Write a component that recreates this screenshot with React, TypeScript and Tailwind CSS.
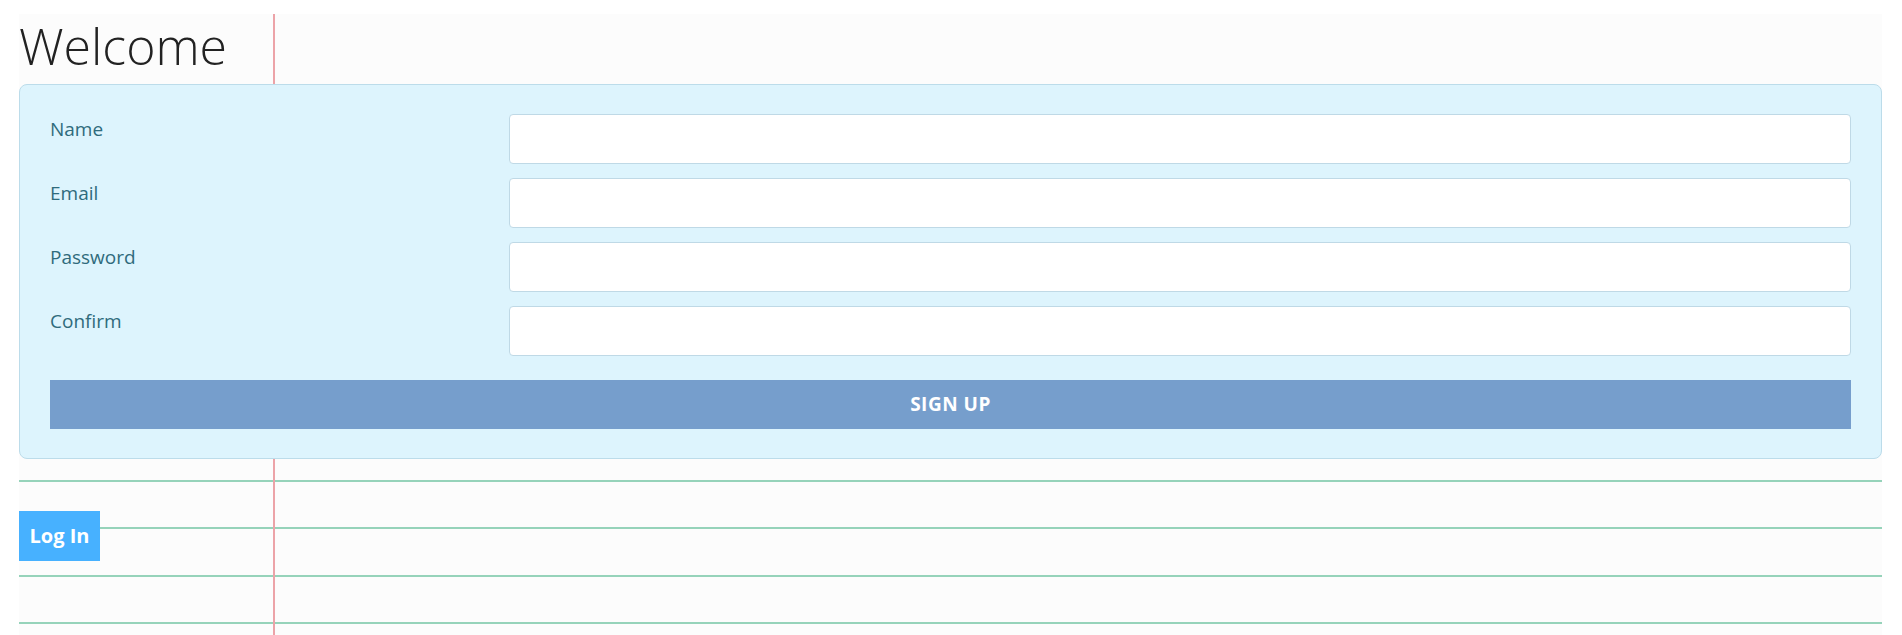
const fields = ["Name", "Email", "Password", "Confirm"]

const lineRows = ["h-[23px]", "h-[47px]", "h-[48px]", "h-[47px]"]

export default function App() {
  return (
    <div className="h-[635px] overflow-hidden bg-white pl-[19px] pr-[20px] pt-[14px] font-['Open_Sans',sans-serif]">
      <div className="relative h-[621px] bg-[#fcfcfc]">
        {/* margin rule of the notebook paper */}
        <div className="absolute bottom-0 left-[254px] top-0 z-[1] w-[2px] bg-[#eca3a8]" />

        <h1 className="mb-[10px] pt-[4px] text-[50px] font-light leading-[56px] text-[#222]">
          Welcome
        </h1>

        <form className="relative z-[2] rounded-[8px] border border-[#bcdcea] bg-[#ddf4fd] px-[30px] py-[29px]">
          <div className="flex flex-col gap-[14px]">
            {fields.map((label) => (
              <div key={label} className="grid grid-cols-[459px_1fr]">
                <label className="pt-px text-[19px] leading-[28px] text-[#2f6b7c]">{label}</label>
                <input
                  type={label === "Password" || label === "Confirm" ? "password" : "text"}
                  className="h-[50px] w-full rounded-[4px] border border-[#bfd9e6] bg-white px-3 text-[18px] outline-none"
                />
              </div>
            ))}
          </div>
          <button
            type="button"
            className="mt-[24px] flex h-[49px] w-full items-center justify-center bg-[#769ecc] text-[19px] font-bold tracking-[0.5px] text-white"
          >
            SIGN UP
          </button>
        </form>

        <div className="relative">
          {lineRows.map((h, i) => (
            <div key={i} className={`${h} border-b-2 border-[#96d3ba]`} />
          ))}
          <button
            type="button"
            className="absolute left-0 top-[52px] z-[2] flex h-[50px] w-[81px] items-center justify-center bg-[#47b1ff] text-[20px] font-bold text-white"
          >
            Log In
          </button>
        </div>
      </div>
    </div>
  )
}
